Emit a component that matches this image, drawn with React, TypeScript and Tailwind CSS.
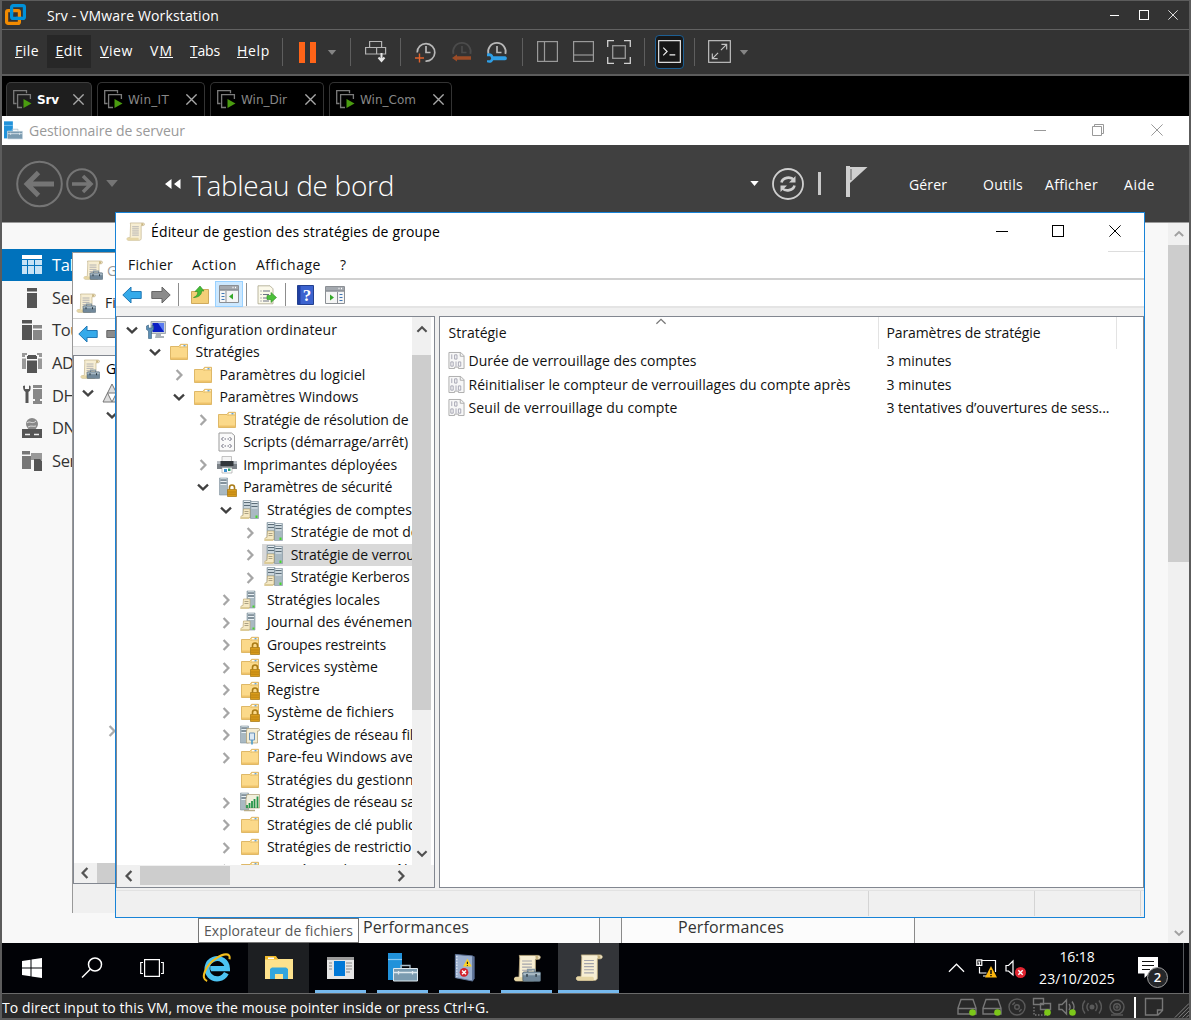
import { useLayoutEffect, useRef, type ReactNode } from "react";

/** Inline text whose tracking is adjusted so that it spans `w` pixels. */
function Fit({ w, className = "", children }: { w: number; className?: string; children: ReactNode }) {
  const ref = useRef<HTMLSpanElement>(null);
  useLayoutEffect(() => {
    const el = ref.current;
    if (!el) return;
    const fixed = el.style.width;
    el.style.width = "auto";
    el.style.letterSpacing = "0px";
    const natural = el.getBoundingClientRect().width;
    const count = el.textContent?.length || 1;
    el.style.letterSpacing = `${(w - natural) / count}px`;
    el.style.width = fixed;
  }, [w]);
  return (
    <span ref={ref} className={`inline-block shrink-0 whitespace-pre ${className}`}>
      {children}
    </span>
  );
}

/* ---------- small shared glyphs ---------- */

const Caret = ({ className }: { className: string }) => (
  <svg viewBox="0 0 10 6" className={`shrink-0 ${className}`}>
    <path d="M0 0h10L5 6z" fill="currentColor" />
  </svg>
);

const Cross = ({ className, sw = 1 }: { className: string; sw?: number }) => (
  <svg viewBox="0 0 12 12" className={`shrink-0 ${className}`} fill="none" stroke="currentColor" strokeWidth={sw}>
    <path d="M.4.4l11.2 11.2M11.6.4L.4 11.6" />
  </svg>
);

const paths = {
  down: "M1 3.600L6 8.400l5-4.800",
  up: "M1 8.400L6 3.600l5 4.800",
  right: "M3.600 1L8.400 6l-4.800 5",
  left: "M8.400 1L3.600 6l4.800 5",
};
const Chevron = ({ dir, className, sw = 2.3 }: { dir: keyof typeof paths; className: string; sw?: number }) => (
  <svg viewBox="0 0 12 12" className={`h-3 w-3 shrink-0 ${className}`} fill="none" stroke="currentColor" strokeWidth={sw}>
    <path d={paths[dir]} />
  </svg>
);

const ScrollIcon = ({ className, tools = false }: { className: string; tools?: boolean }) => (
  <svg viewBox="0 0 20 20" className={`shrink-0 ${className}`}>
    <path d="M4.500 1h13.500c2 0 2 2.600.2 2.800H16V17.500c0 1-1 1.800-2 1.800H2.500c-2 0-2-2.800 0-2.800H4.300L4.800 3z" fill="#f7eed3" stroke="#b9a77c" strokeWidth=".6" />
    <path d="M16 1.300c2.800-.5 3.200 2.400.3 2.600z" fill="#c9b581" />
    <path d="M1.500 16.600h11c1 0 1.500 2.400.2 2.700H2c-1.400-.5-1.400-2.400-.5-2.700z" fill="#e6d6a5" />
    <path d="M6.500 5h7M6.500 7.200h7M6.500 9.400h7M6.500 11.600h7M6.500 13.800h7" stroke="#a3a3ab" strokeWidth=".8" />
    {tools && (
      <g>
        <path d="M10.500 13v-1.800h5V13" fill="none" stroke="#8597a3" strokeWidth="1.200" />
        <rect x="7" y="12.800" width="12.800" height="6.800" rx="1" fill="#71889a" stroke="#4b5c69" strokeWidth=".5" />
        <path d="M7.400 13.400h12v1.800h-12z" fill="#a7b8c3" />
        <path d="M10 14.200v2M16.500 14.200v2" stroke="#2c3942" strokeWidth="1" />
      </g>
    )}
  </svg>
);

/* ---------- host window ---------- */

const VmLogo = () => (
  <svg viewBox="0 0 21 21" className="ml-[5px] h-[21px] w-[21px] shrink-0" fill="none" strokeWidth="3.200">
    <rect x="6.600" y="1.600" width="12.800" height="12.800" rx="1.500" stroke="#0091da" />
    <rect x="1.600" y="6.600" width="12.800" height="12.800" rx="1.500" stroke="#f38b00" />
    <path d="M6.600 10V4.500M11 14.400h6" stroke="#0091da" />
  </svg>
);

const Sep = ({ className }: { className: string }) => <div className={`h-7 w-px shrink-0 bg-[#5e5e5e] ${className}`} />;

const Clock = ({ kind, className }: { kind: "add" | "revert" | "manage"; className: string }) => (
  <svg viewBox="0 0 24 24" className={`h-6 w-6 shrink-0 ${className}`} fill="none">
    <g stroke={kind === "revert" ? "#4b4b4b" : "#b8b8b8"} strokeWidth="1.700">
      {kind === "add" ? <path d="M3.200 12.500A8.800 8.800 0 1 1 11.500 21.200" /> : <path d="M3.400 14A8.800 8.800 0 1 1 20.400 14" />}
      <path d="M12 6v6.500h4.500" />
    </g>
    {kind === "add" && <path d="M5.500 13.500v9M1 18h9" stroke="#e0622c" strokeWidth="1.400" />}
    {kind === "revert" && <path d="M2 18l5-3.500v1.700h14v3.600H7v1.700z" fill="#9c4c27" />}
    {kind === "manage" && (
      <path d="M2 13.800c3-1.200 5.500.2 6.300 2.400H20c2.500 0 2.500 4 0 4H8.300C7.300 22.600 4.500 23.300 2 22.300v-2h3.200l1-2-1-2H2z" fill="#2f9fe6" />
    )}
  </svg>
);

function HostToolbar() {
  return (
    <div className="flex h-[44px] shrink-0 items-center bg-[#333] font-[Open_Sans] text-[14px] text-white">
      <Fit w={24} className="-mt-[3px] ml-[13px] w-[23px]"><u>F</u>ile</Fit>
      <div className="-mt-[2px] ml-[9px] flex h-[33px] w-[44px] items-center justify-center bg-[#272727]"><Fit w={27} className="-mt-px"><u>E</u>dit</Fit></div>
      <Fit w={33} className="-mt-[3px] ml-[9px] w-[32px]"><u>V</u>iew</Fit>
      <Fit w={23} className="-mt-[3px] ml-[18px] w-[22px]">V<u>M</u></Fit>
      <Fit w={30} className="-mt-[3px] ml-[18px] w-[29px]"><u>T</u>abs</Fit>
      <Fit w={33} className="-mt-[3px] ml-[18px] w-[32px]"><u>H</u>elp</Fit>
      <Sep className="ml-[13px]" />
      <div className="ml-[16px] flex h-[21px] w-[17px] shrink-0 justify-between">
        <div className="w-[6px] bg-[#ff6418]" /><div className="w-[6px] bg-[#ff6418]" />
      </div>
      <Caret className="ml-[11px] h-[5px] w-[10px] text-[#858585]" />
      <Sep className="ml-[13px]" />
      <svg viewBox="0 0 22 24" className="ml-[14px] h-6 w-[22px] shrink-0" fill="none" stroke="#b4b4b4" strokeWidth="1.200">
        <path d="M4.600 7.500v-6h12v6M.6 7.500h20v6.500H.6zM11.600 7.500V14" />
        <path d="M16.500 13v8M13.500 17.500l3 3.500 3-3.500" stroke="#e5e5e5" strokeWidth="2" />
      </svg>
      <Sep className="ml-[13px]" />
      <Clock kind="add" className="-mt-px ml-[13px]" />
      <Clock kind="revert" className="-mt-px ml-[12px]" />
      <Clock kind="manage" className="-mt-px ml-[11px]" />
      <Sep className="ml-[13px]" />
      <svg viewBox="0 0 21 21" className="-mt-px ml-[14px] h-[21px] w-[21px] shrink-0" fill="none" stroke="#9a9a9a" strokeWidth="1.200">
        <rect x=".6" y=".6" width="19.800" height="19.800" /><path d="M7.500.6v20" />
      </svg>
      <svg viewBox="0 0 21 21" className="-mt-px ml-[15px] h-[21px] w-[21px] shrink-0" fill="none" stroke="#9a9a9a" strokeWidth="1.200">
        <rect x=".6" y=".6" width="19.800" height="19.800" /><path d="M.6 14h20" />
      </svg>
      <svg viewBox="0 0 24 24" className="-mt-px ml-[13px] h-6 w-6 shrink-0" fill="none" stroke="#d0d0d0" strokeWidth="1.300">
        <path d="M.7 7V.7H7M17 .7h6.300V7M23.300 17v6.300H17M7 23.300H.7V17" />
        <rect x="5.700" y="5.700" width="12.600" height="12.600" stroke="#9a9a9a" />
      </svg>
      <Sep className="ml-[13px]" />
      <div className="ml-[10px] flex h-[34px] w-[29px] shrink-0 items-center justify-center rounded-sm border-[1.500px] border-[#1d5f93] bg-[#171717]">
        <svg viewBox="0 0 24 24" className="-mt-px h-[23px] w-[23px] shrink-0" fill="none" stroke="#f0f0f0" strokeWidth="1.200">
          <rect x=".7" y=".7" width="22.600" height="22.600" />
          <path d="M5.500 8l4 4-4 4M12 15.500h6" />
        </svg>
      </div>
      <Sep className="ml-[10px]" />
      <svg viewBox="0 0 24 24" className="-mt-px ml-[13px] h-[23px] w-[23px] shrink-0" fill="none" stroke="#c4c4c4" strokeWidth="1.200">
        <rect x=".7" y=".7" width="22.600" height="22.600" />
        <path d="M14 4.500h5.500V10M19.500 4.500L13.500 10.500M10 19.500H4.500V14M4.500 19.500l6-6" />
      </svg>
      <Caret className="ml-[8px] h-[5px] w-[10px] text-[#858585]" />
    </div>
  );
}

function VmTab({ name, w, box, active }: { name: string; w: number; box: string; active?: boolean }) {
  return (
    <div className={`flex h-[34px] shrink-0 items-center rounded-t-[5px] border border-b-0 pl-[6px] pr-[7px] ${box} ${active ? "border-[#3d3d3d] bg-[#1e1e1e]" : "border-[#333] bg-black"}`}>
      <svg viewBox="0 0 19 19" className="h-[19px] w-[19px] shrink-0" fill="none" stroke="#7b7b7b" strokeWidth="1.300">
        <path d="M3.500 13.500H.7V.7h12.800v2.500" />
        <path d="M9 17.500H4.600V4.600h12.800V9" />
        <path d="M10.500 9l8 4.500-8 4.500z" fill="#4a9c10" stroke="none" />
      </svg>
      <Fit w={w} className={`ml-[5px] font-[DejaVu_Sans] text-[12px] ${active ? "font-bold text-white" : "text-[#878787]"}`}>{name}</Fit>
      <Cross className="ml-auto h-[11px] w-[11px] text-[#a8a8a8]" sw={1.5} />
    </div>
  );
}

function HostStatusBar() {
  const s = "h-[20px] w-[20px] shrink-0";
  const dot = <circle cx="15.500" cy="15.500" r="3.300" fill="#7cc71a" stroke="none" />;
  const base = { viewBox: "0 0 20 20", fill: "none", stroke: "#777", strokeWidth: 1.4 };
  const dim = { ...base, stroke: "#5a5a5a" };
  const disk = (
    <svg {...base} className={s}>
      <path d="M4 2.500h12l3 8.500v6H1v-6zM1 11.500h18" />
      {dot}
    </svg>
  );
  return (
    <div className="flex h-[25px] shrink-0 items-center border-t border-[#6a6a6a] bg-[#292929] pt-[2px]">
      <Fit w={487} className="font-[Open_Sans] text-[14px] text-white">To direct input to this VM, move the mouse pointer inside or press Ctrl+G.</Fit>
      <div className="ml-auto flex shrink-0 gap-[5px]">
        {disk}
        {disk}
        <svg {...dim} className={s}><circle cx="10" cy="10" r="8" /><circle cx="10" cy="10" r="2.300" /><path d="M5.500 8A5 5 0 0 1 8 5.500M14.500 12a5 5 0 0 1-2.500 2.500" /></svg>
        <svg {...base} className={s}><path d="M1.500 1.500h10v6h-10zM8.500 6.500h10v6h-10z" fill="#292929" /><path d="M2 10v8h14" strokeDasharray="1.500 1.500" />{dot}</svg>
        <svg {...base} className={s}><path d="M2 7.500h3l4.500-4.500v14L5 12.500H2zM12 7c1.500 2 1.500 4 0 6M15 4.500c2.500 3.500 2.500 7.500 0 10" />{dot}</svg>
        <svg {...dim} className={s}><circle cx="10" cy="10" r="1.800" fill="#5a5a5a" /><path d="M6.500 6c-2 2.500-2 5.500 0 8M13.500 6c2 2.500 2 5.500 0 8M3 3.500c-3 4-3 9 0 13M17 3.500c3 4 3 9 0 13" /></svg>
        <svg {...dim} className={s}><circle cx="10" cy="10" r="7" /><circle cx="10" cy="10" r="3.300" /><circle cx="10" cy="10" r="1" /><path d="M4 18h12" /></svg>
      </div>
      <div className="ml-[7px] h-[21px] w-[2px] bg-white" />
      <svg {...base} className="ml-[8px] h-[20px] w-[20px] shrink-0"><path d="M1.500 1.500h17v12l-4.500 4.500H1.500zM18.500 13h-5v5" /></svg>
      <svg viewBox="0 0 16 16" className="ml-[10px] h-[16px] w-[15px] shrink-0 self-end" stroke="#8a8a8a" strokeWidth="1"><path d="M1 16L16 1M5 16L16 5M9 16l7-7M13 16l3-3" /></svg>
    </div>
  );
}

/* ---------- server manager ---------- */

const ServerBlue = ({ className }: { className: string }) => (
  <svg viewBox="0 0 30 29" className={`shrink-0 ${className}`}>
    <path d="M0 0h14v27H0z" fill="#2192da" />
    <path d="M0 6.500h14" stroke="#8accf5" strokeWidth="1.200" />
    <path d="M13 15v-2.500h9V15" fill="none" stroke="#aabdc9" strokeWidth="1.300" />
    <path d="M5.500 15.500h24V28h-24z" fill="#7b9bb0" stroke="#dfe9ef" strokeWidth="1" />
    <path d="M6 19.500h23M10.500 18v3.500M24.500 18v3.500" stroke="#dfe9ef" strokeWidth="1.300" />
  </svg>
);

const sideIcons: ReactNode[] = [
  <g><path d="M0 0h20v4H0z" fill="#fff" /><path d="M0 5h20v14H0z" fill="#c8e3f5" /><path d="M5.500 5v14M12.500 5v14M0 10.500h20" stroke="#0072bc" /></g>,
  <path d="M5 0h10v3.500H5zM5 5h10v15H5z" fill="#555" />,
  <g><path d="M0 0h10v3.500H0zM0 5h10v15H0z" fill="#555" /><path d="M11 5h9v3.500h-9zM11 10h9v10h-9z" fill="#888" /></g>,
  <g><path d="M0 0h5v2H3v2H0zM20 0h-5v2h2v2h3zM0 5.500h4V16H0zM20 5.500h-4V16h4z" fill="#999" /><path d="M6 2h8v1h1v3H5V3h1zM5 7.500h10V20H5z" fill="#555" /></g>,
  <g><path d="M1 1c0 4 1.500 5 2.500 6v11h3V7C8 6 9 5 8.500 1L7 .5V4H3V.5z" fill="#555" /><path d="M11 0h9v3h-9zM11 4h9v10h-9zM13 14h5v2h2v3h-9v-3h2z" fill="#888" /></g>,
  <g><circle cx="10" cy="6" r="6" fill="#888" /><path d="M5 5c3-3 5 2 9-2M6 9c3-2 5 0 8-1" stroke="#ddd" fill="none" /><path d="M0 11h20v9H0z" fill="#555" /><path d="M3 16.500h5M12 16.500h5" stroke="#eee" strokeWidth="1.500" /></g>,
  <g><path d="M0 0h8v3.500H0zM0 5h9v13H0z" fill="#777" /><path d="M9 2h11v7H9z" fill="#999" /><path d="M12 8h6l2 2v10h-8z" fill="#555" /></g>,
];
const sideItems = [
  "Tableau de bord", "Serveur local", "Tous les serveurs", "AD DS", "DHCP", "DNS", "Services de fichiers",
];

function ServerManager() {
  return (
    <div className="flex h-[827px] flex-col bg-white font-[Open_Sans]">
      <div className="flex h-[29px] shrink-0 items-center text-[#999]">
        <ServerBlue className="ml-[2px] h-[19px] w-[19px]" />
        <Fit w={156} className="ml-[6px] text-[14px]">Gestionnaire de serveur</Fit>
        <div className="ml-auto h-px w-3 bg-[#999]" />
        <svg viewBox="0 0 12 12" className="-mt-px ml-[46px] h-3 w-3" fill="none" stroke="#999"><path d="M.5 2.500h9v9h-9zM2.500 2V.5h9v9H10" /></svg>
        <Cross className="-mt-px ml-[47px] mr-[26px] h-3 w-3" />
      </div>
      <div className="flex h-[78px] shrink-0 items-center border-b border-[#9a9a9a] bg-[#404040] text-white">
        <svg viewBox="0 0 48 48" className="ml-[13px] h-12 w-12 shrink-0" fill="none" stroke="#757575">
          <circle cx="24.500" cy="24" r="22.300" strokeWidth="2" /><path d="M39 24H13M23.500 12.500L12 24l11.500 11.500" strokeWidth="4.800" />
        </svg>
        <svg viewBox="0 0 32 32" className="ml-[3px] h-8 w-8 shrink-0" fill="none" stroke="#757575">
          <circle cx="16" cy="16" r="14.800" strokeWidth="2" /><path d="M6 16h18M17 8l8 8-8 8" strokeWidth="3.500" />
        </svg>
        <Caret className="ml-[8px] h-[7px] w-[12px] text-[#757575]" />
        <svg viewBox="0 0 16 10" className="ml-[47px] h-[10px] w-4 shrink-0" fill="#fff"><path d="M6.500 0v10L0 5zM15.500 0v10L9 5z" /></svg>
        <Fit w={202} className="ml-[11px] pt-[2px] text-[28px] font-light leading-none">Tableau de bord</Fit>
        <Caret className="ml-auto h-[5px] w-[9px] text-white" />
        <svg viewBox="0 0 32 32" className="ml-[13px] h-8 w-8 shrink-0" fill="none" stroke="#cfcfcf">
          <circle cx="16" cy="16" r="15" strokeWidth="1.800" />
          <path d="M9.500 14.500c1-5 9-6.500 12.500-2.500M22.500 17.500c-1 5-9 6.500-12.500 2.500" strokeWidth="2.600" />
          <path d="M23.500 8v6.500H17zM8.500 24v-6.500H15z" fill="#cfcfcf" stroke="none" />
        </svg>
        <div className="ml-[14px] h-[23px] w-[3px] bg-[#c8c8c8]" />
        <svg viewBox="0 0 22 31" className="-mt-1 ml-[25px] h-[31px] w-[22px] shrink-0" fill="#cfcfcf"><path d="M0 0h4v31H0zM4 1h17.500L4 17z" /><path d="M5 3v11" stroke="#404040" strokeWidth=".8" /></svg>
        <Fit w={38} className="ml-[41px] pt-[2px] text-[14px]">Gérer</Fit>
        <Fit w={40} className="ml-[36px] pt-[2px] text-[14px]">Outils</Fit>
        <Fit w={53} className="ml-[22px] pt-[2px] text-[14px]">Afficher</Fit>
        <Fit w={31} className="ml-[26px] mr-[34px] pt-[2px] text-[14px]">Aide</Fit>
      </div>
      <div className="flex min-h-0 flex-1 bg-[#f8f8f8]">
        <div className="flex w-[196px] shrink-0 flex-col pt-[26px]">
          {sideItems.map((label, i) => (
            <div key={label} className={`mb-[0.6px] flex h-8 w-full items-center whitespace-nowrap text-[16.500px] ${i === 0 ? "bg-[#0072bc] text-white" : "text-[#333]"}`}>
              <svg viewBox="0 0 20 20" className="ml-[20px] mr-[10px] h-5 w-5 shrink-0">{sideIcons[i]}</svg>
              <span className="pt-px tracking-[-0.4px]">{label}</span>
            </div>
          ))}
        </div>
        <div className="mt-auto flex h-[25px] flex-1 items-start text-[#333]">
          <div className="flex h-full w-[402px] items-start border-r border-[#8a8a8a] bg-[#fcfcfc] pl-[165px]"><Fit w={106} className="text-[16px] leading-[18px]">Performances</Fit></div>
          <div className="ml-[21px] flex h-full w-[294px] items-start border-x border-[#8a8a8a] bg-[#fcfcfc] pl-[56px]"><Fit w={106} className="text-[16px] leading-[18px]">Performances</Fit></div>
        </div>
        <div className="flex w-[21px] shrink-0 flex-col items-center bg-[#f0f0f0]">
          <div className="flex h-[22px] items-center"><Chevron dir="up" className="h-[10px] w-[10px] text-[#a0a0a0]" /></div>
          <div className="h-[317px] w-full bg-[#cdcdcd]" />
          <Chevron dir="down" className="mb-[5px] mt-auto h-[10px] w-[10px] text-[#a0a0a0]" />
        </div>
      </div>
    </div>
  );
}

const Arrow = ({ back, className }: { back?: boolean; className: string }) => (
  <svg viewBox="0 0 20 18" className={`h-[18px] w-5 shrink-0 ${className}`}>
    {back
      ? <path d="M.8 9L9 1v4.500h10.200v7H9V17z" fill="#35aaea" stroke="#2278b4" />
      : <path d="M19.200 9L11 1v4.500H.8v7H11V17z" fill="#8b8b8b" stroke="#666" />}
  </svg>
);

/** Group policy console, mostly hidden behind the editor. */
function PolicyConsole() {
  return (
    <div className="absolute left-[70px] top-[136px] flex h-[661px] w-[44px] flex-col overflow-hidden border-l border-t border-[#999] bg-white font-[Open_Sans] text-[14px]">
      <div className="flex h-[34px] shrink-0 items-center pl-[10px]"><ScrollIcon tools className="h-5 w-5" /><span className="ml-[4px] text-[#999]">G</span></div>
      <div className="flex h-[32px] shrink-0 items-center border-b border-[#ccc] pl-[3px]"><ScrollIcon tools className="h-5 w-5" /><span className="ml-[9px] text-[#222]">Fi</span></div>
      <div className="flex h-[28px] shrink-0 items-center border-b border-[#ddd] pl-[5px] pt-[2px]"><Arrow back className="" /><Arrow className="ml-[8px]" /></div>
      <div className="h-[8px] shrink-0 bg-[#f0f0f0]" />
      <div className="flex h-[529px] shrink-0 flex-col border-y border-l border-[#828790]">
        <div className="flex h-[25px] items-center pl-[6px]"><ScrollIcon tools className="h-5 w-5" /><span className="ml-[6px]">G</span></div>
        <div className="flex h-[24px] items-center pl-[8px] text-[#444]">
          <Chevron dir="down" className="" />
          <svg viewBox="0 0 20 20" className="ml-[8px] h-5 w-5 shrink-0" fill="#ddd" stroke="#777"><path d="M10 1l9 18H1zM5.500 10h9M5.500 10l4.500 9 4.500-9" /></svg>
        </div>
        <div className="flex h-[20px] items-center pl-[32px] text-[#444]"><Chevron dir="down" className="" /></div>
        <div className="mt-[296px] flex h-[20px] items-center pl-[32px] text-[#aaa]"><Chevron dir="right" className="" /></div>
        <div className="mt-auto flex h-[20px] items-center bg-[#f0f0f0] pl-[5px] text-[#555]"><Chevron dir="left" className="" /><div className="ml-[6px] h-full flex-1 bg-[#cdcdcd]" /></div>
      </div>
      <div className="flex-1 bg-[#f0f0f0]" />
    </div>
  );
}

/* ---------- group policy editor ---------- */

type IconKind = "pc" | "folder" | "script" | "printer" | "secure" | "pair" | "single" | "locked" | "wired" | "wifi";

const Folder = () => (
  <g>
    <path d="M1.500 4.500h8.500l1.500-2.200h7V17.500h-17z" fill="#fbd98a" stroke="#d6ab50" strokeWidth=".8" />
    <path d="M1.900 15.500h16.200v1.600H1.900z" fill="#eec26a" />
    <path d="M12 3.800h5.500" stroke="#fff" strokeWidth="1.500" />
    <path d="M14.500 3.800h2" stroke="#4d96cf" strokeWidth="1.300" />
    <path d="M10.500 6l1-1h6.500" fill="none" stroke="#dbb35c" strokeWidth=".7" />
  </g>
);
const Lock = () => (
  <g>
    <path d="M12.500 12.500v-2a2.500 2.500 0 0 1 5 0v2" fill="none" stroke="#a97b16" strokeWidth="1.600" />
    <path d="M10.500 12.500h9V19.500h-9z" fill="#d99c1b" stroke="#a3740e" strokeWidth=".7" />
    <path d="M11 15h8M11 17.200h8" stroke="#b57f10" strokeWidth=".8" />
  </g>
);
const Tower = ({ x, y = 1 }: { x: number; y?: number }) => (
  <g>
    <path d={`M${x} ${y}h8v17h-8z`} fill="#a9b9c2" stroke="#7f919c" strokeWidth=".6" />
    <path d={`M${x + 1} ${y + 1}h6M${x + 1} ${y + 3.5}h6M${x + 1} ${y + 6.5}h6`} stroke="#e9f0f4" strokeWidth="1" />
    <path d={`M${x + 1} ${y + 2}h6M${x + 1} ${y + 5}h6`} stroke="#52636e" strokeWidth=".9" />
  </g>
);
const MiniScroll = () => (
  <g>
    <path d="M3.500 9h6.500v8.500H1.500c-1.500-1 0-2 1.500-2z" fill="#f5e9c5" stroke="#b39d68" strokeWidth=".6" />
    <path d="M4.500 11.500h4M4.500 13.500h4" stroke="#9a8f73" strokeWidth=".8" />
    <path d="M.3 17h9v2h-9z" fill="#dccb98" />
  </g>
);

function TreeIcon({ kind }: { kind: IconKind }) {
  return (
    <svg viewBox="0 0 20 20" className="h-5 w-5 shrink-0">
      {kind === "folder" && <Folder />}
      {kind === "locked" && <g><Folder /><Lock /></g>}
      {kind === "pc" && (
        <g>
          <path d="M5 1.500h14.500v12H5z" fill="#c9d0d6" stroke="#8e979f" strokeWidth=".8" />
          <path d="M6.500 3h11.500v9H6.500z" fill="#0a1fc4" /><path d="M12 3h6v9z" fill="#5a7bf0" />
          <path d="M10 13.500h5V16h3v2h-9z" fill="#aab2b8" />
          <path d="M.5 6v3.500L2.500 11v7.500h3V11l2-1.500V6L6 5v3H2.500V5z" fill="#5d8fb5" stroke="#38617f" strokeWidth=".6" />
        </g>
      )}
      {kind === "script" && (
        <g fill="none">
          <path d="M2 1h12.500L17.500 3.500V19H2z" fill="#fafafa" stroke="#9b9b9b" />
          <path d="M6.500 5l-2 2 2 2M12.500 5l2 2-2 2M7.500 7H9M10.500 7H12M6.500 12l-2 2 2 2M12.500 12l2 2-2 2M7.500 14H9M10.500 14H12" stroke="#68687a" />
        </g>
      )}
      {kind === "printer" && (
        <g>
          <path d="M5 1.500h9.500v5H5z" fill="#f4f4f4" stroke="#aaa" strokeWidth=".7" />
          <path d="M0 6.500h20v7.500H0z" fill="#7b8187" /><path d="M0 6.500h20v2.500H0z" fill="#b6bcc2" /><path d="M3.500 6h13v5h-13z" fill="#33373b" />
          <path d="M5 12.500h10V18H5z" fill="#fff" stroke="#999" strokeWidth=".6" /><path d="M7 14h3v3H7z" fill="#3a8fd0" /><path d="M11 13.500h2.500V16H11z" fill="#2f9c6a" />
        </g>
      )}
      {kind === "secure" && <g><Tower x={2.5} /><Lock /></g>}
      {kind === "pair" && <g><Tower x={3} y={0.5} /><Tower x={10.5} y={1.5} /><MiniScroll /><path d="M15.500 15.500h2v2.500h-2z" fill="#45d62c" /></g>}
      {kind === "single" && <g><Tower x={7} /><MiniScroll /><path d="M12.500 15.500h2v2h-2z" fill="#45d62c" /></g>}
      {kind === "wired" && (
        <g>
          <Tower x={0.5} /><path d="M7 3.500h11.500c1.500 0 1.500 2.500 0 2.500H17.500v12H6.500V6.500z" fill="#f5ecd0" stroke="#a99a70" strokeWidth=".7" />
          <path d="M9.500 8h5v7h-5z" fill="#dbe9f5" stroke="#6c94bb" /><path d="M12 15v4.500" stroke="#4a9bc9" strokeWidth="1.600" />
        </g>
      )}
      {kind === "wifi" && (
        <g>
          <Tower x={0.5} /><path d="M7 2.500h12.500v13.500H6V7z" fill="#f1efdc" stroke="#a99a70" strokeWidth=".7" />
          <path d="M7 16v-3M9.500 16v-5M12 16V9M14.500 16V7M17.500 16V4.500" stroke="#24944a" strokeWidth="1.800" /><path d="M4 18.500h11" stroke="#b9ad88" strokeWidth="1.500" />
        </g>
      )}
    </svg>
  );
}

const indents = ["pl-[8.500px]", "pl-[32.100px]", "pl-[55.900px]", "pl-[79.700px]", "pl-[103.400px]", "pl-[127.200px]"];
type Row = { l: number; s: "open" | "closed" | "none"; k: IconKind; t: string; w: number; sel?: boolean };
const tree: Row[] = [
  { l: 0, s: "open", k: "pc", t: "Configuration ordinateur", w: 165 },
  { l: 1, s: "open", k: "folder", t: "Stratégies", w: 64 },
  { l: 2, s: "closed", k: "folder", t: "Paramètres du logiciel", w: 146 },
  { l: 2, s: "open", k: "folder", t: "Paramètres Windows", w: 139 },
  { l: 3, s: "closed", k: "folder", t: "Stratégie de résolution de noms", w: 205 },
  { l: 3, s: "none", k: "script", t: "Scripts (démarrage/arrêt)", w: 165 },
  { l: 3, s: "closed", k: "printer", t: "Imprimantes déployées", w: 154 },
  { l: 3, s: "open", k: "secure", t: "Paramètres de sécurité", w: 149 },
  { l: 4, s: "open", k: "pair", t: "Stratégies de comptes", w: 145 },
  { l: 5, s: "closed", k: "pair", t: "Stratégie de mot de passe", w: 169 },
  { l: 5, s: "closed", k: "pair", t: "Stratégie de verrouillage du compte", w: 231, sel: true },
  { l: 5, s: "closed", k: "pair", t: "Stratégie Kerberos", w: 119 },
  { l: 4, s: "closed", k: "single", t: "Stratégies locales", w: 113 },
  { l: 4, s: "closed", k: "single", t: "Journal des événements", w: 157 },
  { l: 4, s: "closed", k: "locked", t: "Groupes restreints", w: 119 },
  { l: 4, s: "closed", k: "locked", t: "Services système", w: 111 },
  { l: 4, s: "closed", k: "locked", t: "Registre", w: 53 },
  { l: 4, s: "closed", k: "locked", t: "Système de fichiers", w: 127 },
  { l: 4, s: "closed", k: "wired", t: "Stratégies de réseau filaire", w: 171 },
  { l: 4, s: "closed", k: "folder", t: "Pare-feu Windows avec fonctions", w: 218 },
  { l: 4, s: "none", k: "folder", t: "Stratégies du gestionnaire", w: 172 },
  { l: 4, s: "closed", k: "wifi", t: "Stratégies de réseau sans fil", w: 178 },
  { l: 4, s: "closed", k: "folder", t: "Stratégies de clé publique", w: 166 },
  { l: 4, s: "closed", k: "folder", t: "Stratégies de restriction", w: 153 },
  { l: 4, s: "closed", k: "folder", t: "Stratégies de contrôle", w: 149 },
];

function TreePane() {
  return (
    <div className="flex h-[572px] w-[319px] shrink-0 flex-col border border-[#828790] bg-white">
      <div className="flex h-[548px] shrink-0">
        <div className="w-[294.500px] shrink-0 overflow-hidden pt-[1.500px]">
          {tree.map((r) => (
            <div key={r.t} className={`flex h-[22.500px] items-center ${indents[r.l]}`}>
              {r.s === "open" ? <Chevron dir="down" className="text-[#404040]" /> : r.s === "closed" ? <Chevron dir="right" className="mt-px text-[#a6a6a6]" /> : <span className="w-3 shrink-0" />}
              <div className={`ml-[6px] flex h-full shrink-0 items-center pl-[2px] ${r.sel ? "bg-[#d9d9d9]" : ""}`}>
                <TreeIcon kind={r.k} />
                <Fit w={r.w} className="-mt-px ml-[6.500px]">{r.t}</Fit>
              </div>
            </div>
          ))}
        </div>
        <div className="ml-[0.500px] flex w-[19px] flex-col items-center bg-[#f0f0f0] pt-[7px] text-[#505050]">
          <Chevron dir="up" className="h-[11px]" />
          <div className="mt-[20px] h-[355px] w-full bg-[#cdcdcd]" />
          <Chevron dir="down" className="mb-[6px] mt-auto h-[11px]" />
        </div>
      </div>
      <div className="flex flex-1 items-center bg-[#f0f0f0] text-[#505050]">
        <Chevron dir="left" className="-mt-px ml-[6px]" />
        <div className="-mt-[2px] ml-[5px] h-[19px] w-[90px] bg-[#cdcdcd]" />
        <Chevron dir="right" className="-mt-px ml-auto mr-[27px]" />
      </div>
    </div>
  );
}

const policies = [
  { n: "Durée de verrouillage des comptes", w: 228, v: "3 minutes", vw: 65 },
  { n: "Réinitialiser le compteur de verrouillages du compte après", w: 382, v: "3 minutes", vw: 65 },
  { n: "Seuil de verrouillage du compte", w: 209, v: "3 tentatives d’ouvertures de sess...", vw: 223 },
];

function ListPane() {
  return (
    <div className="ml-[4px] h-[572px] flex-1 border border-[#828790] bg-white">
      <div className="relative flex h-[31.500px] items-center">
        <div className="flex h-full w-[439px] items-center border-r border-[#e3e3e3] pl-[8.500px]"><Fit w={58}>Stratégie</Fit></div>
        <div className="flex h-full w-[238px] items-center border-r border-[#e3e3e3] pl-[7.500px]"><Fit w={154}>Paramètres de stratégie</Fit></div>
        <Chevron dir="up" className="absolute left-[215px] top-[-1px] h-[11px] text-[#777]" sw={1.4} />
      </div>
      {policies.map((p) => (
        <div key={p.n} className="flex h-[23.800px] items-center">
          <svg viewBox="0 0 18 20" className="ml-[8px] h-[19px] w-[17px] shrink-0" fill="none" stroke="#a5a5b3" strokeWidth="1">
            <path d="M1 1.500h12.500L17 5v13.500H11V17H7v1.500H1z" fill="#f7f7f7" stroke="#ababab" /><path d="M13 1.500V5.500h4" stroke="#ababab" />
            <path d="M4 3.500v5M7 4h2.500v4.500H7zM3 11.500h2.500V16H3zM8.500 11v5.500M11 11.500h2.500V16H11z" />
          </svg>
          <div className="ml-[3.500px] w-[418px]"><Fit w={p.w}>{p.n}</Fit></div>
          <Fit w={p.vw}>{p.v}</Fit>
        </div>
      ))}
    </div>
  );
}

const PanelIcon = ({ flip }: { flip?: boolean }) => (
  <svg viewBox="0 0 20 18" className="h-[18px] w-5 shrink-0">
    <path d="M.5.5h19v17H.5z" fill="#f5f5f5" stroke="#8b8f94" /><path d="M1 1h18v4.500H1z" fill="#a4a9af" /><path d="M13.500 2.500h1M16 2.500h1" stroke="#fff" strokeWidth="1.400" /><path d="M1 5h18" stroke="#7c8187" />
    {flip
      ? <g><path d="M5 8.500v6l4-3z" fill="#35a829" /><path d="M12.500 6v11.500" stroke="#8b8f94" /><path d="M14.500 8.500h3M14.500 11.500h3M14.500 14.500h3" stroke="#4077b5" /></g>
      : <g><path d="M14 8.500v6l-4-3z" fill="#35a829" /><path d="M7 6v11.500" stroke="#8b8f94" /><path d="M2.500 8.500h3M2.500 11.500h3M2.500 14.500h3" stroke="#4077b5" /></g>}
  </svg>
);

function PolicyEditor() {
  const sep = "h-[23px] w-px shrink-0 bg-[#8d8d8d]";
  return (
    <div className="absolute left-[113px] top-[96px] flex h-[706px] w-[1030px] flex-col border border-[#1883d7] bg-white font-[Open_Sans] text-[14px] text-[#111]">
      <div className="flex h-[38px] shrink-0 items-center pb-[2px]">
        <ScrollIcon className="ml-[10px] h-[19px] w-[19px]" />
        <Fit w={289} className="ml-[6px] text-black">Éditeur de gestion des stratégies de groupe</Fit>
        <div className="ml-auto h-px w-3 bg-black" />
        <div className="ml-[44px] h-3 w-3 border border-black" />
        <Cross className="ml-[45px] mr-[23px] h-3 w-3 text-black" />
      </div>
      <div className="flex h-[29px] shrink-0 items-center border-b-2 border-[#d0d0d0]">
        <Fit w={45} className="ml-[12px]">Fichier</Fit>
        <Fit w={45} className="ml-[19px]">Action</Fit>
        <Fit w={65} className="ml-[19px]">Affichage</Fit>
        <Fit w={7} className="ml-[19px]">?</Fit>
        <div className="ml-auto h-px w-[36px] self-start bg-[#ddd]" />
      </div>
      <div className="flex h-[28px] shrink-0 items-center border-b-2 border-[#e4e4e4] pt-[3px]">
        <Arrow back className="ml-[6px]" />
        <Arrow className="ml-[9px]" />
        <div className={`ml-[7px] ${sep}`} />
        <svg viewBox="0 0 18 20" className="ml-[12px] h-5 w-[18px] shrink-0">
          <path d="M.5 6.500h9l2-2h6v14H.5z" fill="#f3cf78" stroke="#c49b45" strokeWidth=".8" />
          <path d="M2.500 12.500c3.500-1.500 4.500-3.500 4-6H4L9 1l4 5h-2.500c.5 4-3.500 6.500-8 6.500z" fill="#45bb38" stroke="#2d8f24" strokeWidth=".6" />
        </svg>
        <div className="-mt-px ml-[6px] flex h-[26px] w-[28px] shrink-0 items-center justify-center border border-[#99d1ff] bg-[#cce8ff]"><PanelIcon /></div>
        <div className={`ml-[3px] ${sep}`} />
        <svg viewBox="0 0 20 20" className="ml-[10px] h-5 w-5 shrink-0">
          <path d="M1 .8h12l3 3v15H1z" fill="#fbf9ea" stroke="#a9a48a" strokeWidth=".8" />
          <path d="M3.500 6h1M6 6h7M3.500 9.500h1M6 9.500h6M3.500 13h1M6 13h4M3.500 16h1M6 16h6" stroke="#6d7285" strokeWidth="1.100" />
          <path d="M10 10.500h4V7.500l5.500 5-5.500 5v-3h-4z" fill="#4cc03a" stroke="#2f8f24" strokeWidth=".6" />
        </svg>
        <div className={`ml-[8px] ${sep}`} />
        <svg viewBox="0 0 17 20" className="ml-[11px] h-5 w-[17px] shrink-0">
          <path d="M.5.5h16v19H.5z" fill="#3c63cf" stroke="#23408f" /><path d="M1 1h2.500v18H1z" fill="#1f3fa3" />
          <text x="10" y="15.500" textAnchor="middle" fontSize="17" fontWeight="bold" fontFamily="Liberation Serif" fill="#fff">?</text>
        </svg>
        <div className="ml-[11px] shrink-0 pt-px"><PanelIcon flip /></div>
      </div>
      <div className="flex min-h-0 flex-1 flex-col bg-[#f0f0f0] pt-[8px]">
        <div className="flex h-[572px]">
          <TreePane />
          <ListPane />
        </div>
        <div className="mt-[2px] flex h-[26px] border-t border-[#e2e2e2]">
          <div className="w-[753px] border-r border-[#d4d4d4]" />
          <div className="w-[166px] border-r border-[#d4d4d4]" />
          <div className="w-[106px] border-r border-[#d4d4d4]" />
        </div>
      </div>
    </div>
  );
}

/* ---------- guest taskbar ---------- */

function TaskItem({ ml, w = "w-[51px]", tone = "", bar = true, children }: { ml: string; w?: string; tone?: string; bar?: boolean; children: ReactNode }) {
  return (
    <div className={`flex h-[50px] shrink-0 flex-col items-center ${ml} ${w} ${tone}`}>
      <div className="flex h-[47px] items-center pt-[2px]">{children}</div>
      {bar && <div className="h-[3px] w-full bg-[#76b9ed]" />}
    </div>
  );
}

function Taskbar() {
  return (
    <div className="flex h-[50px] shrink-0 bg-[#010206] font-[Open_Sans] text-white">
      <svg viewBox="0 0 20 20" className="ml-[20px] mt-[15px] h-5 w-5 shrink-0" fill="#fff"><path d="M0 3l8.500-1.200v7.700H0zM9.500 1.600L20 0v9.500H9.500zM0 10.500h8.500v7.700L0 17zM9.500 10.500H20V20L9.500 18.400z" /></svg>
      <svg viewBox="0 0 22 22" className="ml-[39px] mt-[14px] h-[22px] w-[22px] shrink-0" fill="none" stroke="#fff" strokeWidth="1.500"><circle cx="14" cy="7.500" r="6.500" /><path d="M9.500 12L1 20.500" /></svg>
      <svg viewBox="0 0 24 18" className="ml-[37px] mt-[16px] h-[18px] w-6 shrink-0" fill="none" stroke="#fff" strokeWidth="1.200"><path d="M4.600.6h14.800v16.800H4.600zM3 3.500H.7v11H3M21 3.500h2.300v11H21" /></svg>
      <svg viewBox="0 0 28 28" className="ml-[38px] mt-[10px] h-[29px] w-[29px] shrink-0" fill="none">
        <path d="M23.500 19.500A9.800 9.800 0 1 1 24.500 15H8.500" stroke="#4cc3f2" strokeWidth="5" />
        <path d="M8 14.500h16" stroke="#4cc3f2" strokeWidth="3.600" />
        <path d="M5 27C-2 25 3 12 14 5 20 .8 28-1 26.500 6" stroke="#f2bd1d" strokeWidth="2" />
      </svg>
      <TaskItem ml="ml-[17px]" w="w-[61px]" tone="bg-[#1d1f22]" bar={false}>
        <svg viewBox="0 0 28 24" className="h-6 w-7"><path d="M0 1h11l2 2h15v20H0z" fill="#fde28d" /><path d="M0 0h11l2 3.500H0z" fill="#efb92a" /><path d="M3 1.500h6v1.500H3z" fill="#fff" /><path d="M5 23V13l2-1.500h14L23 13v10h-5v-5h-8v5z" fill="#32a6de" /></svg>
      </TaskItem>
      <TaskItem ml="ml-[6px]">
        <svg viewBox="0 0 27 22" className="h-[22px] w-[27px]"><path d="M0 0h27v22H0z" fill="#e6e6e6" /><path d="M0 0h27v3H0z" fill="#9b9b9b" /><path d="M2 6h3M2 9h3M2 12h3M19 6h6M19 9h6M19 12h6M19 15h4" stroke="#888" /><path d="M7 4h11v15H7z" fill="#0078d7" /></svg>
      </TaskItem>
      <TaskItem ml="ml-[11px]"><ServerBlue className="h-[29px] w-[30px]" /></TaskItem>
      <TaskItem ml="ml-[11px]">
        <svg viewBox="0 0 22 30" className="h-[29px] w-[22px]"><path d="M1 1.500L19 3v26L1 25.500z" fill="#9db1cf" stroke="#5f7599" /><path d="M19 3l2 .5v23l-2 2.500z" fill="#5d7297" /><path d="M2.500 3v22" stroke="#dbe4f2" strokeWidth="1.500" strokeDasharray="1.500 1.500" /><path d="M13.500 6l4.500 8H9z" fill="#ffd320" /><path d="M13.500 9v2.500M13.500 12.300v1" stroke="#222" strokeWidth="1.200" /><circle cx="10" cy="20" r="4.500" fill="#d3232d" /><path d="M8 18l4 4M12 18l-4 4" stroke="#fff" strokeWidth="1.500" /></svg>
      </TaskItem>
      <TaskItem ml="ml-[11px]"><ScrollIcon tools className="h-[30px] w-[28px]" /></TaskItem>
      <TaskItem ml="ml-[6px]" w="w-[61px]" tone="bg-[#333539]"><ScrollIcon className="h-[29px] w-[28px]" /></TaskItem>
      <svg viewBox="0 0 18 10" className="ml-auto mt-[20px] h-[10px] w-[17px] shrink-0" fill="none" stroke="#fff" strokeWidth="1.300"><path d="M1 9l8-8 8 8" /></svg>
      <svg viewBox="0 0 22 20" className="ml-[11px] mt-[16px] h-5 w-[22px] shrink-0" fill="none" stroke="#fff" strokeWidth="1.200">
        <path d="M5.500 1.500h14v11.500M3.500 8v6h7M7 17h4" /><path d="M.8.8h5v5.500h-5zM2 3h2.500M3.300 3v3" />
        <path d="M15 7l6 11.500H9z" fill="#fcb70e" stroke="none" /><path d="M15 11v4M15 16v1.300" stroke="#111" strokeWidth="1.500" />
      </svg>
      <svg viewBox="0 0 22 20" className="ml-[7px] mt-[16px] h-5 w-[22px] shrink-0" fill="none" stroke="#fff" strokeWidth="1.200">
        <path d="M1 6.500h2.500L8 2v14l-4.500-4H1z" /><circle cx="15.500" cy="13.500" r="5.500" fill="#e02430" stroke="none" /><path d="M13.300 11.300l4.400 4.400M17.700 11.300l-4.400 4.400" strokeWidth="1.400" />
      </svg>
      <div className="ml-[12px] mt-[3px] flex w-[76px] flex-col items-center text-[14px] leading-[22px]"><Fit w={35}>16:18</Fit><Fit w={76}>23/10/2025</Fit></div>
      <div className="relative ml-[23px] mt-[14px] h-9 w-[31px]">
        <svg viewBox="0 0 20 21" className="h-[21px] w-5"><path d="M0 0h20v16.500h-9L6.500 21v-4.500H0z" fill="#fff" /><path d="M4 4.500h12M4 8.500h12M4 12.500h8" stroke="#111" strokeWidth="1.200" /></svg>
        <div className="absolute left-[9px] top-[10px] flex h-[21px] w-[21px] items-center justify-center rounded-full border border-[#a0a0a0] bg-[#25272a] text-[13px] font-semibold">2</div>
      </div>
      <div className="ml-[14px] mr-[5px] w-px shrink-0 bg-[#55585c]" />
    </div>
  );
}

export default function App() {
  return (
    <div className="flex h-[1020px] w-[1191px] flex-col overflow-hidden border-x-2 border-b-2 border-t border-[#5c5c5c] bg-black">
      <div className="flex h-[29px] shrink-0 items-center border-b border-[#626262] bg-[#333] text-white">
        <div className="-ml-[2px] -mt-px flex"><VmLogo /></div>
        <Fit w={172} className="ml-[21px] font-[Open_Sans] text-[14px]">Srv - VMware Workstation</Fit>
        <div className="ml-auto h-px w-[9px] bg-white" />
        <div className="-mt-px ml-[20px] h-[10px] w-[10px] border border-white" />
        <Cross className="-mt-px ml-[19px] mr-[11px] h-[10px] w-[10px]" />
      </div>
      <HostToolbar />
      <div className="flex h-[42px] shrink-0 items-end border-t-2 border-[#5c5c5c] bg-black pl-[4px]">
        <VmTab name="Srv" w={22} box="w-[86px]" active />
        <VmTab name="Win_IT" w={41} box="ml-[5px] w-[108px]" />
        <VmTab name="Win_Dir" w={46} box="ml-[5px] w-[114px]" />
        <VmTab name="Win_Com" w={56} box="ml-[5px] w-[123px]" />
      </div>
      <div className="relative flex h-[877px] shrink-0 flex-col overflow-hidden">
        <ServerManager />
        <PolicyConsole />
        <PolicyEditor />
        <div className="absolute left-[196px] top-[802px] flex h-[25px] w-[161px] items-center border border-[#767676] bg-white pl-[5px] font-[Open_Sans] text-[14px] text-[#575757]"><Fit w={149}>Explorateur de fichiers</Fit></div>
        <Taskbar />
      </div>
      <HostStatusBar />
    </div>
  );
}
